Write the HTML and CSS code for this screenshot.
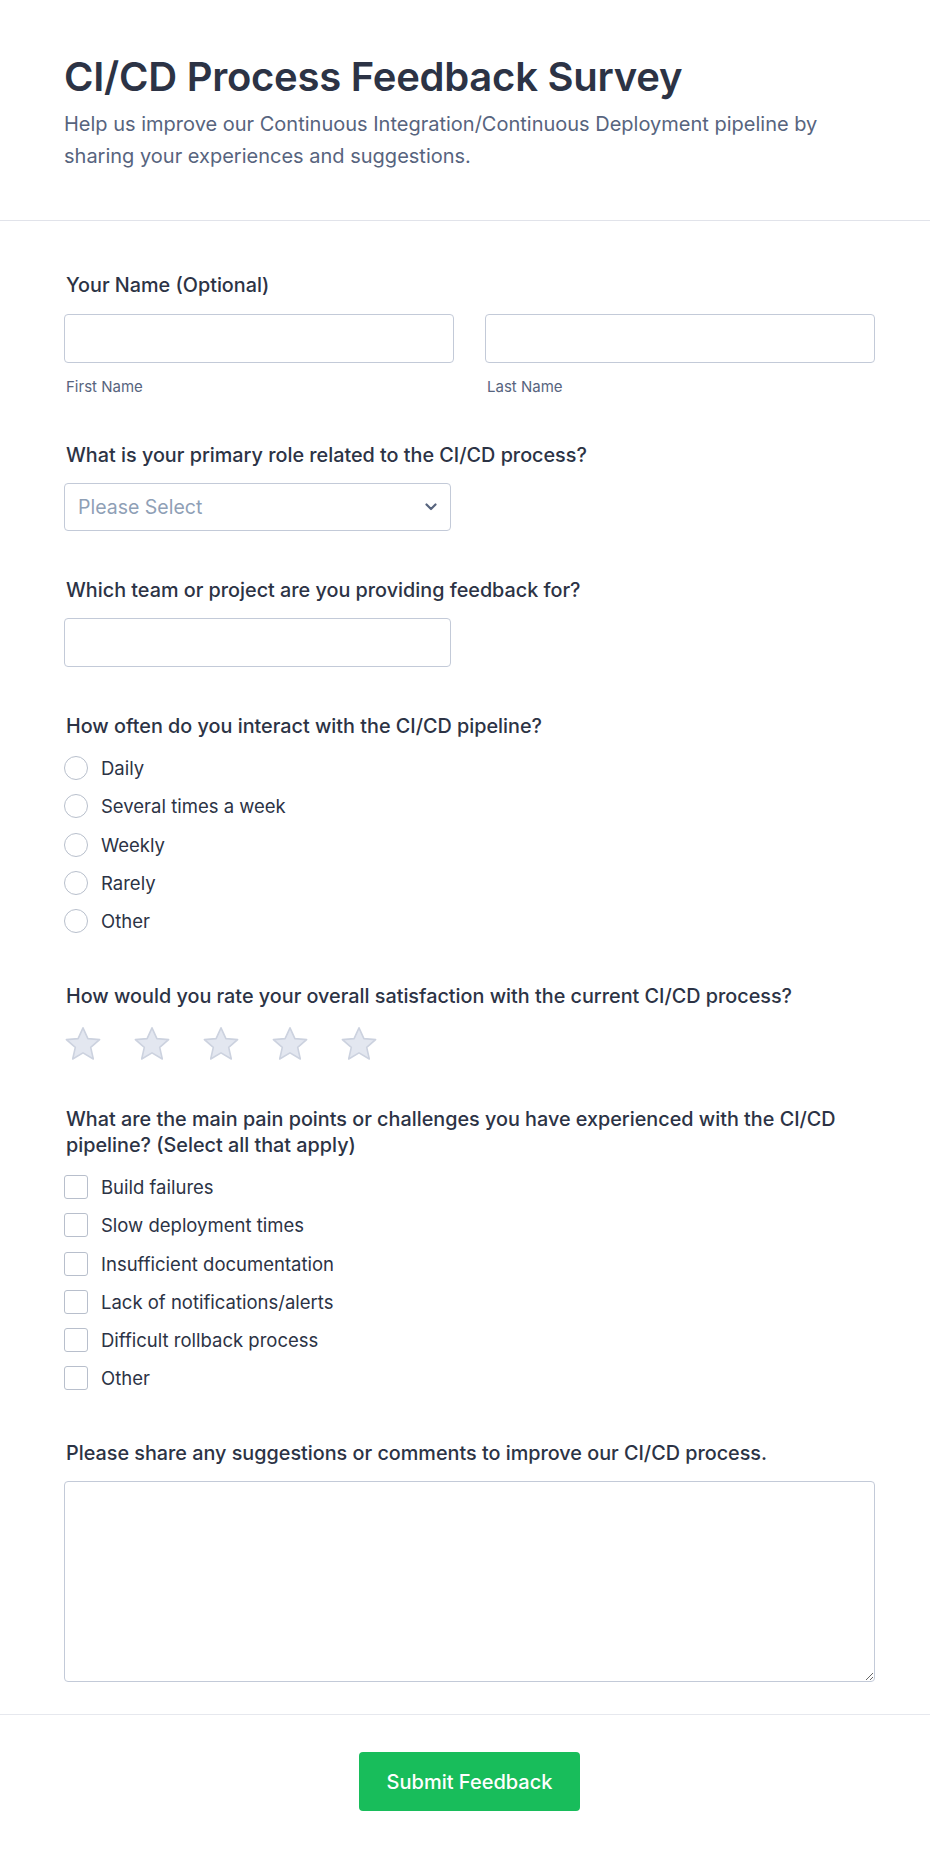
FILE: index.html
```html
<!DOCTYPE html>
<html lang="en">
<head>
<meta charset="utf-8">
<title>CI/CD Process Feedback Survey</title>
<link rel="stylesheet" href="styles.css">
</head>
<body>
<header class="header">
  <h1 class="title">CI/CD Process Feedback Survey</h1>
  <p class="subtitle">Help us improve our Continuous Integration/Continuous Deployment pipeline by sharing your experiences and suggestions.</p>
</header>
<form class="form">
  <div class="field">
    <div class="label">Your Name (Optional)</div>
    <div class="name-row">
      <div class="name-col">
        <input class="input" type="text">
        <div class="sublabel">First Name</div>
      </div>
      <div class="name-col">
        <input class="input" type="text">
        <div class="sublabel">Last Name</div>
      </div>
    </div>
  </div>

  <div class="field">
    <div class="label">What is your primary role related to the CI/CD process?</div>
    <div class="select">
      <span class="placeholder">Please Select</span>
      <svg class="chevron" width="12" height="8" viewBox="0 0 12 8"><path d="M1.5 1.5 L6 6 L10.5 1.5" fill="none" stroke="#57647e" stroke-width="2.2" stroke-linecap="round" stroke-linejoin="round"/></svg>
    </div>
  </div>

  <div class="field">
    <div class="label">Which team or project are you providing feedback for?</div>
    <input class="input half" type="text">
  </div>

  <div class="field">
    <div class="label">How often do you interact with the CI/CD pipeline?</div>
    <div class="options">
      <div class="option"><span class="radio"></span><span>Daily</span></div>
      <div class="option"><span class="radio"></span><span>Several times a week</span></div>
      <div class="option"><span class="radio"></span><span>Weekly</span></div>
      <div class="option"><span class="radio"></span><span>Rarely</span></div>
      <div class="option"><span class="radio"></span><span>Other</span></div>
    </div>
  </div>

  <div class="field tight">
    <div class="label">How would you rate your overall satisfaction with the current CI/CD process?</div>
    <div class="stars">
      <svg class="star" width="38" height="36" viewBox="0 0 38 36"><path d="M19 1.8 L23.9 12.6 L35.6 13.6 L26.7 21.4 L29.3 33 L19 26.9 L8.7 33 L11.3 21.4 L2.4 13.6 L14.1 12.6 Z" fill="#e3e7f0" stroke="#ccd2df" stroke-width="1.6" stroke-linejoin="round"/></svg>
      <svg class="star" width="38" height="36" viewBox="0 0 38 36"><path d="M19 1.8 L23.9 12.6 L35.6 13.6 L26.7 21.4 L29.3 33 L19 26.9 L8.7 33 L11.3 21.4 L2.4 13.6 L14.1 12.6 Z" fill="#e3e7f0" stroke="#ccd2df" stroke-width="1.6" stroke-linejoin="round"/></svg>
      <svg class="star" width="38" height="36" viewBox="0 0 38 36"><path d="M19 1.8 L23.9 12.6 L35.6 13.6 L26.7 21.4 L29.3 33 L19 26.9 L8.7 33 L11.3 21.4 L2.4 13.6 L14.1 12.6 Z" fill="#e3e7f0" stroke="#ccd2df" stroke-width="1.6" stroke-linejoin="round"/></svg>
      <svg class="star" width="38" height="36" viewBox="0 0 38 36"><path d="M19 1.8 L23.9 12.6 L35.6 13.6 L26.7 21.4 L29.3 33 L19 26.9 L8.7 33 L11.3 21.4 L2.4 13.6 L14.1 12.6 Z" fill="#e3e7f0" stroke="#ccd2df" stroke-width="1.6" stroke-linejoin="round"/></svg>
      <svg class="star" width="38" height="36" viewBox="0 0 38 36"><path d="M19 1.8 L23.9 12.6 L35.6 13.6 L26.7 21.4 L29.3 33 L19 26.9 L8.7 33 L11.3 21.4 L2.4 13.6 L14.1 12.6 Z" fill="#e3e7f0" stroke="#ccd2df" stroke-width="1.6" stroke-linejoin="round"/></svg>
    </div>
  </div>

  <div class="field">
    <div class="label">What are the main pain points or challenges you have experienced with the CI/CD pipeline? (Select all that apply)</div>
    <div class="options">
      <div class="option"><span class="checkbox"></span><span>Build failures</span></div>
      <div class="option"><span class="checkbox"></span><span>Slow deployment times</span></div>
      <div class="option"><span class="checkbox"></span><span>Insufficient documentation</span></div>
      <div class="option"><span class="checkbox"></span><span>Lack of notifications/alerts</span></div>
      <div class="option"><span class="checkbox"></span><span>Difficult rollback process</span></div>
      <div class="option"><span class="checkbox"></span><span>Other</span></div>
    </div>
  </div>

  <div class="field last">
    <div class="label">Please share any suggestions or comments to improve our CI/CD process.</div>
    <textarea class="textarea"></textarea>
  </div>
</form>
<footer class="footer">
  <button class="submit" type="button">Submit Feedback</button>
</footer>
</body>
</html>
```

FILE: styles.css
```css
* { box-sizing: border-box; }

html, body {
  margin: 0;
  padding: 0;
  background: #ffffff;
}

body {
  font-family: Inter, "Noto Sans", "Liberation Sans", sans-serif;
  color: #2c3345;
}

.header {
  padding: 53px 55px 48px 64px;
  border-bottom: 1px solid #e1e3ea;
}

.title {
  margin: 0;
  font-size: 40px;
  line-height: 48px;
  font-weight: 600;
  color: #2c3345;
  letter-spacing: -0.25px;
}

.subtitle {
  margin: 7px 0 0 0;
  font-size: 20px;
  line-height: 32px;
  color: #57647e;
}

.form {
  padding: 51px 55px 32px 64px;
  border-bottom: 1px solid #e6e8ee;
}

.field {
  margin-bottom: 46px;
}

.field.tight {
  margin-bottom: 44px;
}

.field.last {
  margin-bottom: 0;
}

.label {
  font-size: 19.8px;
  line-height: 26px;
  font-weight: 500;
  color: #2c3345;
  padding-left: 2px;
  margin-bottom: 15px;
}

.field:first-child .label {
  margin-bottom: 16px;
}

.name-row {
  display: flex;
  gap: 31px;
}

.name-col {
  flex: 1;
}

.input {
  display: block;
  width: 100%;
  height: 49px;
  border: 1px solid #c3cad8;
  border-radius: 4px;
  background: #fff;
  font-family: inherit;
  font-size: 18px;
  padding: 0 12px;
}

.input.half {
  width: 387px;
}

.sublabel {
  margin-top: 15px;
  font-size: 15px;
  line-height: 18px;
  color: #57647e;
  padding-left: 2px;
}

.select {
  width: 387px;
  height: 48px;
  border: 1px solid #c3cad8;
  border-radius: 4px;
  display: flex;
  align-items: center;
  justify-content: space-between;
  padding: 0 13px 0 13px;
}

.placeholder {
  font-size: 19.5px;
  color: #8fa0b6;
}

.chevron {
  display: block;
}

.options {
  display: flex;
  flex-direction: column;
  gap: 6.25px;
  margin-top: -2px;
}

.option {
  display: flex;
  align-items: center;
  height: 32px;
  gap: 13px;
  font-size: 18.5px;
  color: #2c3345;
}

.radio {
  width: 24px;
  height: 24px;
  border: 1px solid #b8bfcc;
  border-radius: 50%;
  flex: none;
}

.checkbox {
  width: 24px;
  height: 24px;
  border: 1px solid #b8bfcc;
  border-radius: 3px;
  flex: none;
}

.stars {
  display: flex;
  gap: 31px;
  margin-top: 17px;
}

.star {
  display: block;
}

.textarea {
  display: block;
  width: 100%;
  height: 201px;
  border: 1px solid #c3cad8;
  border-radius: 4px;
  font-family: inherit;
  font-size: 18px;
  resize: vertical;
}

.footer {
  padding: 37px 55px 40px 64px;
  display: flex;
  justify-content: center;
}

.submit {
  width: 221px;
  height: 59px;
  background: #18bd5b;
  color: #ffffff;
  border: none;
  border-radius: 4px;
  font-family: inherit;
  font-size: 20px;
  font-weight: 500;
}
```
